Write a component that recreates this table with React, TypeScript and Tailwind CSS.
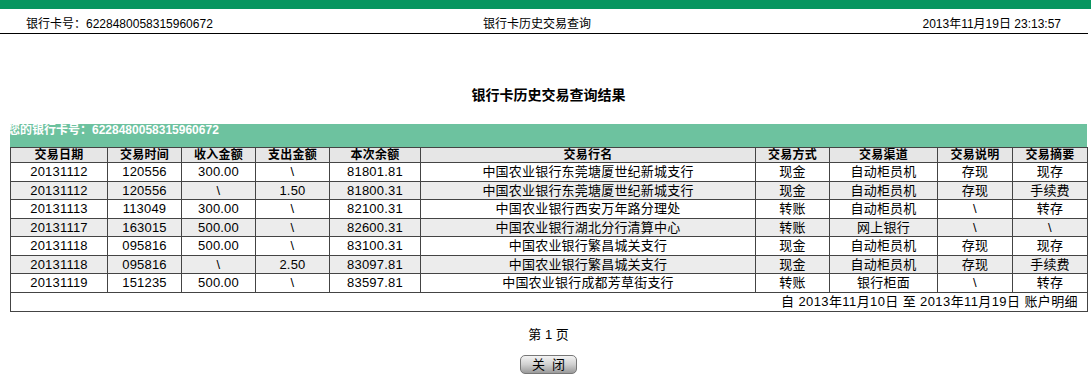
import React from 'react';

const FONT = { fontFamily: '"Liberation Sans", "Noto Sans CJK SC", sans-serif' };

const COLS = [
  { title: '交易日期', width: 97 },
  { title: '交易时间', width: 74 },
  { title: '收入金额', width: 74 },
  { title: '支出金额', width: 74 },
  { title: '本次余额', width: 91 },
  { title: '交易行名', width: 335 },
  { title: '交易方式', width: 74 },
  { title: '交易渠道', width: 108 },
  { title: '交易说明', width: 75 },
  { title: '交易摘要', width: 75 },
];

const ROWS: string[][] = [
  ['20131112', '120556', '300.00', '\\', '81801.81', '中国农业银行东莞塘厦世纪新城支行', '现金', '自动柜员机', '存现', '现存'],
  ['20131112', '120556', '\\', '1.50', '81800.31', '中国农业银行东莞塘厦世纪新城支行', '现金', '自动柜员机', '存现', '手续费'],
  ['20131113', '113049', '300.00', '\\', '82100.31', '中国农业银行西安万年路分理处', '转账', '自动柜员机', '\\', '转存'],
  ['20131117', '163015', '500.00', '\\', '82600.31', '中国农业银行湖北分行清算中心', '转账', '网上银行', '\\', '\\'],
  ['20131118', '095816', '500.00', '\\', '83100.31', '中国农业银行繁昌城关支行', '现金', '自动柜员机', '存现', '现存'],
  ['20131118', '095816', '\\', '2.50', '83097.81', '中国农业银行繁昌城关支行', '现金', '自动柜员机', '存现', '手续费'],
  ['20131119', '151235', '500.00', '\\', '83597.81', '中国农业银行成都芳草街支行', '转账', '银行柜面', '\\', '转存'],
];

export default function App() {
  return (
    <div className="w-[1091px] h-[381px] bg-white text-black overflow-hidden" style={FONT}>
      <div className="h-[9px] bg-[#079660]" />

      {/* top info line */}
      <div className="w-[1088px] h-[25px] flex items-end pb-[2px] border-b border-black text-[12px] leading-[14px]">
        <div className="w-[483px] pl-[26px]">银行卡号：6228480058315960672</div>
        <div className="w-[120px]">银行卡历史交易查询</div>
        <div className="flex-1 text-right pr-[27px]">2013年11月19日 23:13:57</div>
      </div>

      <div className="mt-[53px] text-center text-[14px] leading-[16px] font-bold pl-[6px]">
        银行卡历史交易查询结果
      </div>

      {/* green banner */}
      <div className="mt-[22px] ml-[10px] w-[1077px] h-[23px] bg-[#6dc29f]">
        <div className="-mt-[1px] -ml-[2px] text-[12px] leading-[12px] font-bold text-white">
          您的银行卡号：6228480058315960672
        </div>
      </div>

      <table className="ml-[10px] w-[1077px] border-collapse table-fixed border border-[#444]">
        <colgroup>
          {COLS.map((c) => (
            <col key={c.title} style={{ width: c.width }} />
          ))}
        </colgroup>
        <thead>
          <tr className="h-[15px] bg-[#e6e6e6]">
            {COLS.map((c) => (
              <th key={c.title} className="border border-[#444] p-0 text-[12px] leading-[13px] font-bold text-center tracking-[0.3px]">
                {c.title}
              </th>
            ))}
          </tr>
        </thead>
        <tbody>
          {ROWS.map((row, i) => (
            <tr key={i} className={`h-[18.5px] ${i % 2 === 1 ? 'bg-[#ececec]' : 'bg-white'}`}>
              {row.map((cell, j) => (
                <td key={j} className="border border-[#444] p-0 text-[13px] leading-[15px] text-center tracking-[0.2px]">
                  {cell}
                </td>
              ))}
            </tr>
          ))}
          <tr className="h-[19px]">
            <td colSpan={10} className="border border-[#444] p-0 pr-[9px] text-[13px] leading-[15px] text-right tracking-[0.4px]">
              自 2013年11月10日 至 2013年11月19日 账户明细
            </td>
          </tr>
        </tbody>
      </table>

      <div className="mt-[15px] text-center text-[13px] leading-[16px] pl-[6px]">第 1 页</div>

      <div className="mt-[12px] flex justify-center pl-[6px]">
        <button className="w-[57px] h-[19px] rounded-[5px] border border-[#777] bg-gradient-to-b from-[#f4f4f4] via-[#d0d0d0] to-[#9a9a9a] text-[13px] leading-[15px] text-black">
          关&nbsp;&nbsp;闭
        </button>
      </div>
    </div>
  );
}
